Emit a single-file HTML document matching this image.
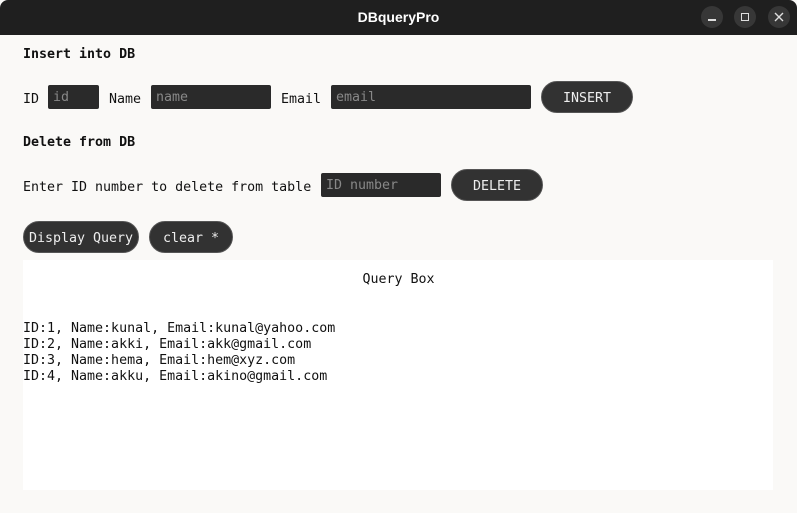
<!DOCTYPE html>
<html><head><meta charset="utf-8"><style>
*{margin:0;padding:0;box-sizing:border-box}
body{width:797px;height:513px;background:#faf9f7;font-family:"DejaVu Sans Mono","Liberation Mono",monospace;font-size:13.3px;color:#111;position:relative;overflow:hidden}
.tb{position:absolute;left:0;top:0;width:797px;height:35px;background:#1f1f1f;border-radius:8px 8px 0 0}
.tt{position:absolute;left:0;width:797px;top:9px;text-align:center;color:#fff;font-family:"Liberation Sans",sans-serif;font-weight:bold;font-size:14px}
.wc{position:absolute;top:6px;width:22px;height:22px;border-radius:50%;background:#373737}
.a{position:absolute;white-space:pre}
.b{font-weight:bold}
.in{position:absolute;background:#2a2a2a;border-radius:2px;color:#888;padding-left:5px;line-height:26px;height:24px;overflow:hidden}
.bt{position:absolute;background:#323232;border:1px solid #555;border-radius:16px;color:#eee;text-align:center;line-height:33px;height:32px;overflow:hidden}
.qb{position:absolute;left:23px;top:260px;width:750px;height:230px;background:#fff}
</style></head><body>
<div class="tb"><div class="tt">DBqueryPro</div>
<div class="wc" style="left:701px"><div style="position:absolute;left:7px;top:13px;width:8px;height:1.5px;background:#ddd"></div></div>
<div class="wc" style="left:734px"><div style="position:absolute;left:7px;top:7px;width:8px;height:8px;border:1.3px solid #ddd"></div></div>
<div class="wc" style="left:768px"><svg width="22" height="22" style="position:absolute;left:0;top:0"><path d="M7 7L15 15M15 7L7 15" stroke="#ddd" stroke-width="1.4"/></svg></div>
</div>
<div class="a b" style="left:23px;top:47px">Insert into DB</div>
<div class="a" style="left:23px;top:92px">ID</div>
<div class="in" style="left:48px;top:85px;width:51px">id</div>
<div class="a" style="left:109px;top:92px">Name</div>
<div class="in" style="left:151px;top:85px;width:120px">name</div>
<div class="a" style="left:281px;top:92px">Email</div>
<div class="in" style="left:331px;top:85px;width:200px">email</div>
<div class="bt" style="left:541px;top:81px;width:92px">INSERT</div>
<div class="a b" style="left:23px;top:135px">Delete from DB</div>
<div class="a" style="left:23px;top:180px">Enter ID number to delete from table</div>
<div class="in" style="left:321px;top:173px;width:120px">ID number</div>
<div class="bt" style="left:451px;top:169px;width:92px">DELETE</div>
<div class="bt" style="left:23px;top:221px;width:116px">Display Query</div>
<div class="bt" style="left:149px;top:221px;width:84px">clear *</div>
<div class="qb"></div>
<div class="a" style="left:0;width:797px;text-align:center;top:272px">Query Box</div>
<div class="a" style="left:23px;top:321px;line-height:16px">ID:1, Name:kunal, Email:kunal@yahoo.com
ID:2, Name:akki, Email:akk@gmail.com
ID:3, Name:hema, Email:hem@xyz.com
ID:4, Name:akku, Email:akino@gmail.com</div>
</body></html>
